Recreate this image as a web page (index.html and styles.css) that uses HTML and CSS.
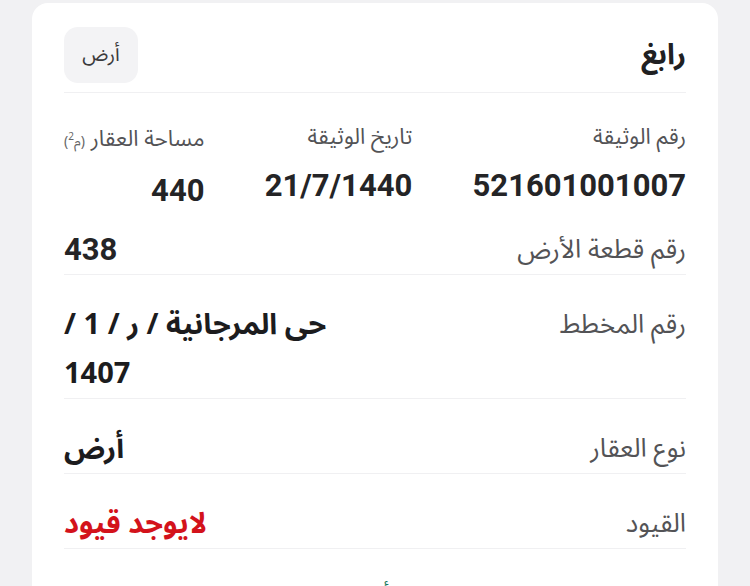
FILE: index.html
```html
<!DOCTYPE html>
<html lang="ar" dir="rtl">
<head>
    <meta charset="UTF-8">
    <meta name="viewport" content="width=device-width, initial-scale=1.0">
    <title>بيانات العقار</title>
    <link rel="stylesheet" href="styles.css">
</head>
<body>
    <div class="card">
        <header class="card-head">
            <h1>رابغ</h1>
            <span class="badge">أرض</span>
        </header>

        <div class="doc-info">
            <div class="doc-col">
                <span class="label">رقم الوثيقة</span>
                <span class="value num">521601001007</span>
            </div>
            <div class="doc-col">
                <span class="label">تاريخ الوثيقة</span>
                <span class="value num">21/7/1440</span>
            </div>
            <div class="doc-col">
                <span class="label">مساحة العقار <span class="unit">(م<sup>2</sup>)</span></span>
                <span class="value num">440</span>
            </div>
        </div>

        <div class="info-row first">
            <span class="label">رقم قطعة الأرض</span>
            <span class="value num">438</span>
        </div>
        <div class="info-row">
            <span class="label">رقم المخطط</span>
            <span class="value wrap">حى المرجانية / ر / 1 / 1407</span>
        </div>
        <div class="info-row">
            <span class="label">نوع العقار</span>
            <span class="value">أرض</span>
        </div>
        <div class="info-row">
            <span class="label">القيود</span>
            <span class="value red">لايوجد قيود</span>
        </div>

        <a class="more" href="#">أقل</a>
    </div>
</body>
</html>
```

FILE: styles.css
```css
body {
    margin: 0;
    background-color: #f1f1f3;
    font-family: "Noto Sans Arabic", "Noto Sans", "DejaVu Sans", sans-serif;
    color: #1c1c1e;
    direction: rtl;
}

.card {
    margin: 3px 32px 0;
    padding: 0 32px 20px;
    background-color: #fff;
    border-radius: 16px;
}

.card-head {
    display: flex;
    justify-content: space-between;
    align-items: center;
    height: 56px;
    padding: 24px 0 9px;
    border-bottom: 1px solid #f0f0f2;
}

.card-head h1 {
    margin: 0;
    font-size: 29px;
    font-weight: 700;
    line-height: 40px;
    color: #202022;
}

.badge {
    display: flex;
    align-items: center;
    justify-content: center;
    width: 74px;
    height: 56px;
    background-color: #f3f3f5;
    border-radius: 14px;
    font-size: 20px;
    line-height: 1;
    color: #3a3a3c;
}

.label {
    font-size: 26px;
    color: #535356;
    line-height: 49px;
}

.value {
    font-size: 29px;
    font-weight: 700;
    line-height: 49px;
    color: #1c1c1e;
}

.num {
    font-family: Roboto, "Noto Sans Arabic", "DejaVu Sans", sans-serif;
    font-size: 31px;
    font-weight: 700;
    color: #242426;
}

.red {
    color: #d3121b;
}

/* three document columns */
.doc-info {
    display: flex;
    justify-content: space-between;
    padding-top: 22px;
}

.doc-col {
    display: flex;
    flex-direction: column;
    gap: 2px;
}

.doc-col .label {
    font-size: 22px;
    line-height: 44px;
}

.doc-col .value {
    line-height: 50px;
}

.unit {
    font-size: 14px;
    color: #666;
}

.unit sup {
    font-size: 10px;
}

.info-row {
    display: flex;
    justify-content: space-between;
    align-items: flex-start;
    padding-top: 25px;
    border-bottom: 1px solid #f0f0f2;
}

.info-row.first {
    padding-top: 9px;
}

.info-row .wrap {
    width: 268px;
    line-height: 49px;
    text-align: left;
}

.more {
    display: block;
    text-align: center;
    padding-top: 24px;
    font-size: 20px;
    color: #1a7a5e;
    text-decoration: none;
}
```
